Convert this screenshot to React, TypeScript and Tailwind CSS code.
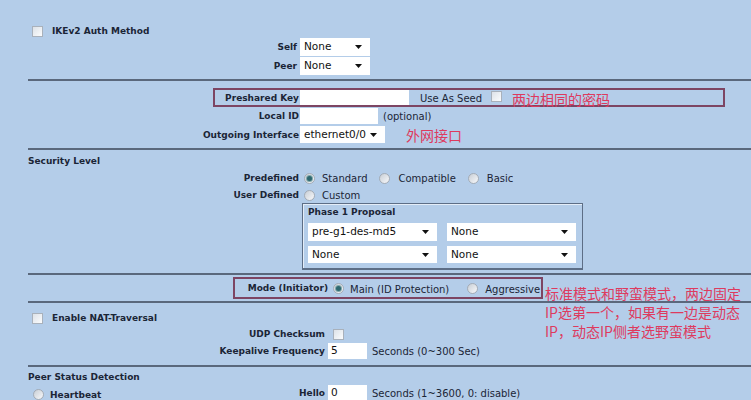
import React from "react";

const Arrow = () => (
  <svg width="7" height="4" viewBox="0 0 7 4" className="shrink-0">
    <path d="M0 0h7L3.5 4z" fill="#111" />
  </svg>
);

function Sel({ className, text }: { className: string; text: string }) {
  return (
    <div
      className={
        "bg-white flex items-center justify-between pl-[4px] pr-[8px] text-[10.5px] text-[#111] font-['DejaVu_Sans',sans-serif] " +
        className
      }
    >
      <span>{text}</span>
      <Arrow />
    </div>
  );
}

function Inp({ className, text = "" }: { className: string; text?: string }) {
  return (
    <div className={"bg-white flex items-center pl-[3px] text-[10.5px] text-[#111] " + className}>
      {text}
    </div>
  );
}

function Check({ className = "" }: { className?: string }) {
  return (
    <div
      className={
        "w-[11px] h-[11px] shrink-0 border border-[#a9b1bb] bg-gradient-to-br from-[#dde2e8] to-[#fbfcfd] " + className
      }
    />
  );
}

function Radio({ checked = false, className = "" }: { checked?: boolean; className?: string }) {
  return (
    <div
      className={
        "w-[11px] h-[11px] shrink-0 rounded-full border border-[#a4acb6] bg-gradient-to-br from-[#c9cfd6] to-[#f7f8fa] flex items-center justify-center " +
        className
      }
    >
      {checked && <div className="w-[5px] h-[5px] rounded-full bg-[#2d6870] ring-1 ring-[#7fa6aa]" />}
    </div>
  );
}

const Line = ({ className }: { className: string }) => (
  <div className={"h-[2px] bg-[#5a687c] " + className} />
);

const B = "font-bold text-[9px] whitespace-nowrap translate-y-[1px]";
const N = "text-[10px] whitespace-nowrap";
const CJK = "font-['Noto_Sans_CJK_SC',sans-serif] text-[14px] leading-none text-[#de3a5e] whitespace-nowrap";

export default function App() {
  return (
    <div className="w-[751px] h-[400px] bg-[#b4cde9] relative overflow-hidden font-['DejaVu_Sans',sans-serif] text-[#1b2536] pl-[28px] pt-[24px]">
      {/* IKEv2 */}
      <div className="h-[14px] flex items-center pl-[4px]">
        <Check />
        <span className={"ml-[9px] " + B}>IKEv2 Auth Method</span>
      </div>
      <div className="h-[18px] flex items-center">
        <span className={"w-[269px] text-right " + B}>Self</span>
        <Sel className="ml-[3px] w-[70px] h-[18px]" text="None" />
      </div>
      <div className="mt-[1px] h-[18px] flex items-center">
        <span className={"w-[269px] text-right " + B}>Peer</span>
        <Sel className="ml-[3px] w-[70px] h-[18px]" text="None" />
      </div>
      <Line className="mt-[4px]" />

      {/* Preshared */}
      <div className="mt-[7px] ml-[185px] w-[512px] h-[19px] border-2 border-[#7d4563] flex items-center">
        <span className={"w-[84px] text-right " + B}>Preshared Key</span>
        <Inp className="ml-[1px] w-[109px] h-[15px]" />
        <span className={"ml-[11px] translate-y-[1px] " + N}>Use As Seed</span>
        <Check className="ml-[9px] -mt-[3px]" />
        <span className={"ml-[10px] mt-[3px] " + CJK}>两边相同的密码</span>
      </div>
      <div className="mt-[1px] h-[16px] flex items-center">
        <span className={"w-[271px] text-right " + B}>Local ID</span>
        <Inp className="ml-[1px] w-[78px] h-[16px]" />
        <span className={"ml-[5px] " + N}>(optional)</span>
      </div>
      <div className="mt-[2px] h-[17px] flex items-center">
        <span className={"w-[271px] text-right " + B}>Outgoing Interface</span>
        <Sel className="ml-[1px] w-[85px] h-[17px]" text="ethernet0/0" />
        <span className={"ml-[21px] " + CJK}>外网接口</span>
      </div>
      <Line className="mt-[5px]" />

      {/* Security Level */}
      <div className="mt-[3px] h-[16px] flex items-center">
        <span className={B}>Security Level</span>
      </div>
      <div className="mt-[1px] h-[16px] flex items-center">
        <span className={"w-[271px] text-right " + B}>Predefined</span>
        <Radio checked className="ml-[5px]" />
        <span className={"ml-[7px] " + N}>Standard</span>
        <Radio className="ml-[11px]" />
        <span className={"ml-[9px] " + N}>Compatible</span>
        <Radio className="ml-[12px]" />
        <span className={"ml-[8px] " + N}>Basic</span>
      </div>
      <div className="mt-[1px] h-[16px] flex items-center">
        <span className={"w-[271px] text-right " + B}>User Defined</span>
        <Radio className="ml-[5px]" />
        <span className={"ml-[7px] " + N}>Custom</span>
      </div>
      <div className="ml-[274px] w-[281px] h-[67px] border border-[#5d6e86] border-b-2 shadow-[inset_1px_1px_0_#e4edf8] px-[5px]">
        <div className="h-[16px] flex items-center">
          <span className={B}>Phase 1 Proposal</span>
        </div>
        <div className="mt-[3px] flex gap-[10px]">
          <Sel className="w-[129px] h-[18px]" text="pre-g1-des-md5" />
          <Sel className="w-[129px] h-[18px]" text="None" />
        </div>
        <div className="mt-[5px] flex gap-[10px]">
          <Sel className="w-[129px] h-[17px]" text="None" />
          <Sel className="w-[129px] h-[17px]" text="None" />
        </div>
      </div>
      <Line className="mt-[3px]" />

      {/* Mode */}
      <div className="mt-[2px] ml-[205px] w-[310px] h-[22px] border-2 border-[#7d4563] flex items-center">
        <span className={"w-[93px] text-right " + B}>Mode (Initiator)</span>
        <Radio checked className="ml-[5px]" />
        <span className={"ml-[6px] translate-y-[1px] " + N}>Main (ID Protection)</span>
        <Radio className="ml-[18px]" />
        <span className={"ml-[7px] translate-y-[1px] " + N}>Aggressive</span>
      </div>
      <Line className="mt-[2px]" />

      {/* NAT */}
      <div className="mt-[7px] h-[16px] flex items-center pl-[4px]">
        <Check />
        <span className={"ml-[9px] " + B}>Enable NAT-Traversal</span>
      </div>
      <div className="h-[16px] flex items-center">
        <span className={"w-[297px] text-right " + B}>UDP Checksum</span>
        <Check className="ml-[8px]" />
      </div>
      <div className="mt-[1px] h-[16px] flex items-center">
        <span className={"w-[297px] text-right " + B}>Keepalive Frequency</span>
        <Inp className="ml-[3px] w-[39px] h-[16px]" text="5" />
        <span className={"ml-[5px] " + N}>Seconds (0~300 Sec)</span>
      </div>
      <Line className="mt-[6px]" />

      {/* Peer Status Detection */}
      <div className="mt-[2px] h-[16px] flex items-center">
        <span className={B}>Peer Status Detection</span>
      </div>
      <div className="h-[16px] flex items-center">
        <div className="w-[297px] flex items-center justify-between pl-[5px]">
          <div className="flex items-center mt-[3px]">
            <Radio />
            <span className={"ml-[6px] " + B}>Heartbeat</span>
          </div>
          <span className={B}>Hello</span>
        </div>
        <Inp className="ml-[3px] w-[39px] h-[16px]" text="0" />
        <span className={"ml-[5px] " + N}>Seconds (1~3600, 0: disable)</span>
      </div>

      {/* annotation */}
      <div className="absolute left-[545px] top-[284px] font-['Noto_Sans_CJK_SC',sans-serif] text-[14px] leading-[19px] text-[#de3a5e] whitespace-nowrap">
        <div>标准模式和野蛮模式，两边固定</div>
        <div>IP选第一个，如果有一边是动态</div>
        <div>IP，动态IP侧者选野蛮模式</div>
      </div>
    </div>
  );
}
